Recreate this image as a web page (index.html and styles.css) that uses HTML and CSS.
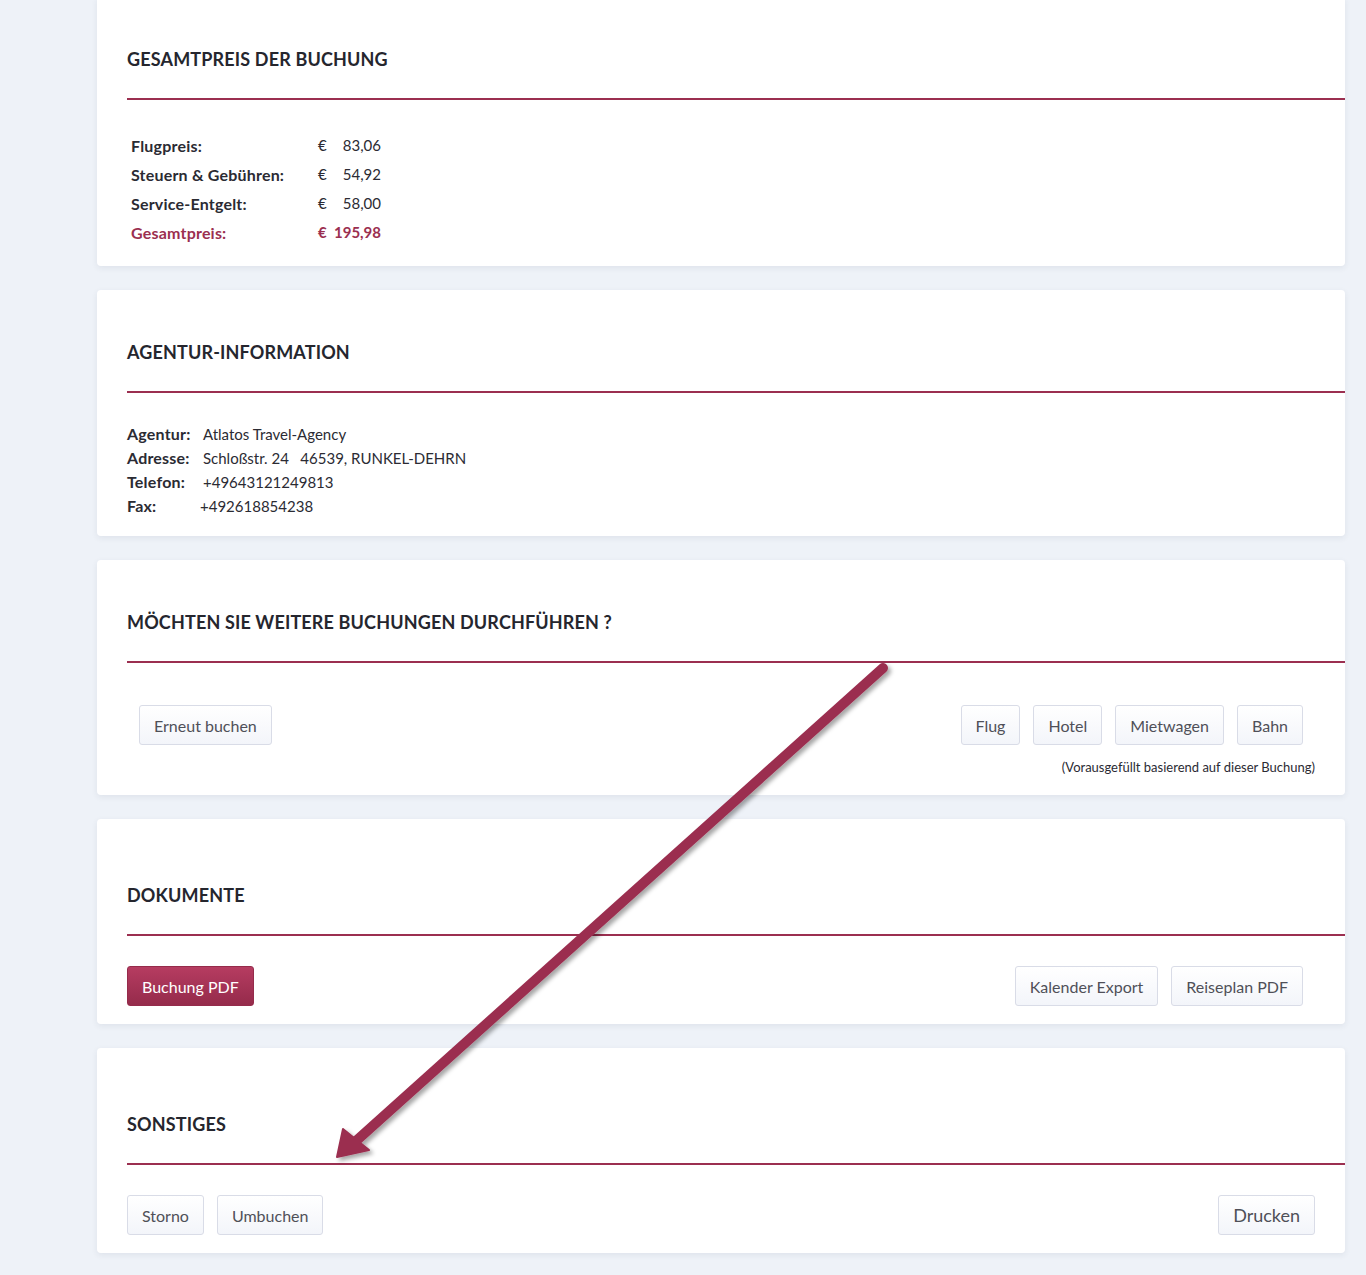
FILE: index.html
```html
<!DOCTYPE html>
<html lang="de">
<head>
<meta charset="utf-8">
<title>Buchung</title>
<link rel="stylesheet" href="styles.css">
</head>
<body>
<div class="page">
  <section class="card">
    <header class="card-head"><h2>Gesamtpreis der Buchung</h2></header>
    <div class="card-body prices">
      <div class="price-row"><span class="lbl">Flugpreis:</span><span class="cur">€</span><span class="amt">83,06</span></div>
      <div class="price-row"><span class="lbl">Steuern &amp; Gebühren:</span><span class="cur">€</span><span class="amt">54,92</span></div>
      <div class="price-row"><span class="lbl">Service-Entgelt:</span><span class="cur">€</span><span class="amt">58,00</span></div>
      <div class="price-row total"><span class="lbl">Gesamtpreis:</span><span class="cur">€</span><span class="amt">195,98</span></div>
    </div>
  </section>

  <section class="card">
    <header class="card-head"><h2>Agentur-Information</h2></header>
    <div class="card-body info">
      <div class="info-row"><span class="ilbl">Agentur:</span><span>Atlatos Travel-Agency</span></div>
      <div class="info-row"><span class="ilbl">Adresse:</span><span>Schloßstr. 24&nbsp;&nbsp; 46539, RUNKEL-DEHRN</span></div>
      <div class="info-row"><span class="ilbl">Telefon:</span><span>+49643121249813</span></div>
      <div class="info-row"><span class="ilbl fax">Fax:</span><span>+492618854238</span></div>
    </div>
  </section>

  <section class="card">
    <header class="card-head"><h2>Möchten Sie weitere Buchungen durchführen ?</h2></header>
    <div class="card-body actions-body">
      <div class="btn-row">
        <div class="btn-group indent"><button class="btn">Erneut buchen</button></div>
        <div class="btn-group inset-right">
          <button class="btn">Flug</button>
          <button class="btn">Hotel</button>
          <button class="btn">Mietwagen</button>
          <button class="btn">Bahn</button>
        </div>
      </div>
      <p class="note">(Vorausgefüllt basierend auf dieser Buchung)</p>
    </div>
  </section>

  <section class="card">
    <header class="card-head tall"><h2>Dokumente</h2></header>
    <div class="card-body">
      <div class="btn-row">
        <div class="btn-group"><button class="btn btn-primary">Buchung PDF</button></div>
        <div class="btn-group inset-right">
          <button class="btn">Kalender Export</button>
          <button class="btn">Reiseplan PDF</button>
        </div>
      </div>
    </div>
  </section>

  <section class="card">
    <header class="card-head tall"><h2>Sonstiges</h2></header>
    <div class="card-body">
      <div class="btn-row">
        <div class="btn-group">
          <button class="btn">Storno</button>
          <button class="btn">Umbuchen</button>
        </div>
        <div class="btn-group"><button class="btn btn-large">Drucken</button></div>
      </div>
    </div>
  </section>
</div>

<svg class="annotation" width="1366" height="1275" viewBox="0 0 1366 1275" aria-hidden="true">
  <defs>
    <filter id="sh" x="-10%" y="-10%" width="120%" height="120%">
      <feDropShadow dx="3" dy="3" stdDeviation="2" flood-color="#000" flood-opacity="0.35"/>
    </filter>
  </defs>
  <g filter="url(#sh)" fill="#9b2f50" stroke="#9b2f50">
    <line x1="883" y1="668" x2="356" y2="1141" stroke-width="10" stroke-linecap="round"/>
    <polygon points="337,1157 343,1129 369,1150" stroke-width="2" stroke-linejoin="round"/>
  </g>
</svg>
</body>
</html>
```
FILE: styles.css
```css
* { box-sizing: border-box; }

html, body {
  margin: 0;
  padding: 0;
}

body {
  background: #eef2f8;
  font-family: "Lato", "Liberation Sans", sans-serif;
  color: #2b2b33;
  position: relative;
  width: 1366px;
  height: 1275px;
  overflow: hidden;
}

.page {
  margin-top: -3px;
  padding-left: 97px;
  width: 1345px;
  display: flex;
  flex-direction: column;
  gap: 24px;
}

.card {
  background: #fff;
  border-radius: 4px;
  box-shadow: 0 2px 6px rgba(40, 50, 80, 0.08);
}

.card-head {
  margin-left: 30px;
  padding: 49px 0 25px;
  border-bottom: 2px solid #9b2f50;
}
.card-head.tall { padding-top: 63px; }

.card-head h2 {
  margin: 0;
  font-size: 18px;
  line-height: 27px;
  font-weight: 700;
  text-transform: uppercase;
  color: #25262e;
  letter-spacing: 0.15px;
}

.card-body {
  padding: 30px 30px 18px;
}

/* prices */
.prices {
  padding: 31px 30px 19px 34px;
}
.price-row {
  display: grid;
  grid-template-columns: 187px 14px 49px;
  align-items: center;
  height: 29px;
  font-size: 15px;
  line-height: 29px;
  color: #2b2b33;
}
.price-row .lbl { font-weight: 700; font-size: 16px; letter-spacing: 0.2px; }
.price-row .amt { text-align: right; }
.price-row.total { color: #9b2f50; font-weight: 700; }

/* info */
.info { padding: 29px 30px 18px; }
.info-row {
  font-size: 15px;
  line-height: 24px;
  height: 24px;
  display: flex;
  align-items: center;
}
.ilbl {
  font-weight: 700;
  font-size: 16px;
  letter-spacing: 0.2px;
  width: 76px;
  flex: none;
}
.ilbl.fax { width: 73px; }

/* buttons */
.actions-body { padding-top: 42px; padding-bottom: 19px; }

.btn-row {
  display: flex;
  justify-content: space-between;
  align-items: center;
}
.btn-group {
  display: flex;
  gap: 13px;
}
.btn-group.indent { padding-left: 12px; }
.btn-group.inset-right { margin-right: 12px; }

.btn {
  font-family: inherit;
  height: 40px;
  padding: 0 14px;
  border: 1px solid #d9dce7;
  border-radius: 3px;
  background: linear-gradient(#ffffff, #f3f5fa);
  color: #4f5058;
  font-size: 16px;
  cursor: pointer;
}
.btn-primary {
  background: linear-gradient(#b63c61, #952b4b);
  border-color: #952b4b;
  color: #fff;
}
.btn-large { font-size: 18px; padding: 0 14px; }

.note {
  margin: 13px 0 0;
  text-align: right;
  font-size: 13px;
  line-height: 18px;
  color: #2b2b33;
}

.annotation {
  position: absolute;
  top: 0;
  left: 0;
  pointer-events: none;
}
```
